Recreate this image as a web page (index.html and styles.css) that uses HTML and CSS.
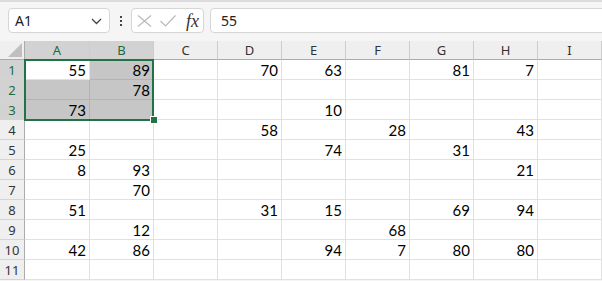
FILE: index.html
```html
<!DOCTYPE html>
<html lang="en">
<head>
<meta charset="UTF-8" />
<meta name="viewport" content="width=device-width, initial-scale=1" />
<title>Sheet</title>
<link rel="stylesheet" href="styles.css">
</head>
<body>

<div class="formula-bar">
  <div class="name-box">
    <span>A1</span>
    <svg width="11" height="7" viewBox="0 0 11 7"><path d="M1 1 L5.5 5.5 L10 1" fill="none" stroke="#444" stroke-width="1.3"/></svg>
  </div>
  <div class="grip"><i></i><i></i><i></i></div>
  <div class="fx-box">
    <svg width="15" height="12" viewBox="0 0 15 12"><path d="M1 0.5 L14 11.5 M14 0.5 L1 11.5" stroke="#b9b9b9" stroke-width="1.2" fill="none"/></svg>
    <svg width="16" height="12" viewBox="0 0 16 12"><path d="M0.5 6 L5.5 11 L15.5 0.5" stroke="#b9b9b9" stroke-width="1.2" fill="none"/></svg>
    <span class="fx">fx</span>
  </div>
  <div class="formula-input">55</div>
</div>

<div class="sheet">
  <div class="corner"><svg width="14" height="14" viewBox="0 0 14 14"><path d="M14 0 L14 14 L0 14 Z" fill="#bfbfbf"/></svg></div>
  <div class="ch sel">A</div><div class="ch sel">B</div><div class="ch">C</div><div class="ch">D</div><div class="ch">E</div><div class="ch">F</div><div class="ch">G</div><div class="ch">H</div><div class="ch">I</div>

  <div class="rh sel">1</div><div class="c">55</div><div class="c hl">89</div><div class="c"></div><div class="c">70</div><div class="c">63</div><div class="c"></div><div class="c">81</div><div class="c">7</div><div class="c"></div>
  <div class="rh sel">2</div><div class="c hl"></div><div class="c hl">78</div><div class="c"></div><div class="c"></div><div class="c"></div><div class="c"></div><div class="c"></div><div class="c"></div><div class="c"></div>
  <div class="rh sel">3</div><div class="c hl">73</div><div class="c hl"></div><div class="c"></div><div class="c"></div><div class="c">10</div><div class="c"></div><div class="c"></div><div class="c"></div><div class="c"></div>
  <div class="rh">4</div><div class="c"></div><div class="c"></div><div class="c"></div><div class="c">58</div><div class="c"></div><div class="c">28</div><div class="c"></div><div class="c">43</div><div class="c"></div>
  <div class="rh">5</div><div class="c">25</div><div class="c"></div><div class="c"></div><div class="c"></div><div class="c">74</div><div class="c"></div><div class="c">31</div><div class="c"></div><div class="c"></div>
  <div class="rh">6</div><div class="c">8</div><div class="c">93</div><div class="c"></div><div class="c"></div><div class="c"></div><div class="c"></div><div class="c"></div><div class="c">21</div><div class="c"></div>
  <div class="rh">7</div><div class="c"></div><div class="c">70</div><div class="c"></div><div class="c"></div><div class="c"></div><div class="c"></div><div class="c"></div><div class="c"></div><div class="c"></div>
  <div class="rh">8</div><div class="c">51</div><div class="c"></div><div class="c"></div><div class="c">31</div><div class="c">15</div><div class="c"></div><div class="c">69</div><div class="c">94</div><div class="c"></div>
  <div class="rh">9</div><div class="c"></div><div class="c">12</div><div class="c"></div><div class="c"></div><div class="c"></div><div class="c">68</div><div class="c"></div><div class="c"></div><div class="c"></div>
  <div class="rh">10</div><div class="c">42</div><div class="c">86</div><div class="c"></div><div class="c"></div><div class="c">94</div><div class="c">7</div><div class="c">80</div><div class="c">80</div><div class="c"></div>
  <div class="rh">11</div><div class="c"></div><div class="c"></div><div class="c"></div><div class="c"></div><div class="c"></div><div class="c"></div><div class="c"></div><div class="c"></div><div class="c"></div>

  <!-- selection A1:B3 -->
  <div class="selection"></div>
  <div class="fill-handle"></div>
</div>

</body>
</html>
```

FILE: styles.css
```css
body {
  margin: 0;
  background: #f5f5f5;
  font-family: "Noto Sans", "Open Sans", sans-serif;
  color: #222;
  overflow: hidden;
}
.formula-bar {
  height: 41px;
  box-sizing: border-box;
  border-top: 2px solid #dcdcdc;
  padding: 6px 0 8px 8px;
  display: flex;
  align-items: stretch;
}
.name-box, .fx-box, .formula-input {
  background: #fff;
  border: 1px solid #d6d6d6;
  border-radius: 4px;
  box-sizing: border-box;
}
.name-box {
  width: 102px;
  display: flex;
  align-items: center;
  justify-content: space-between;
  padding: 0 7px 0 6px;
  font-size: 14px;
}
.name-box svg {
  margin-top: 2px;
}
.grip {
  width: 21px;
  display: flex;
  flex-direction: column;
  align-items: center;
  justify-content: center;
  gap: 2px;
}
.grip i {
  width: 2px;
  height: 2px;
  background: #444;
}
.fx-box {
  width: 73px;
  display: flex;
  align-items: center;
  padding: 0 4px 0 5px;
  gap: 8px;
}
.fx {
  font-family: "Liberation Serif", serif;
  font-style: italic;
  font-size: 18px;
  color: #333;
  margin-left: 2px;
  line-height: 1;
}
.formula-input {
  flex: 1;
  margin-left: 6px;
  margin-right: -4px;
  padding-left: 10px;
  font-size: 14px;
  display: flex;
  align-items: center;
}
.sheet {
  position: relative;
  display: grid;
  grid-template-columns: 25px 65px repeat(8, 64px);
  grid-template-rows: 19px repeat(11, 20px);
  background: #fff;
}
.corner, .ch, .rh {
  background: #efefef;
  box-sizing: border-box;
  font-size: 13px;
  color: #333;
  display: flex;
  align-items: center;
  justify-content: center;
}
.corner {
  border-right: 1px solid #ababab;
  border-bottom: 1px solid #ababab;
  align-items: flex-end;
  justify-content: flex-end;
  padding: 0 2px 2px 0;
}
.ch {
  border-right: 1px solid #cdcdcd;
  border-bottom: 1px solid #ababab;
}
.rh {
  border-right: 1px solid #ababab;
  border-bottom: 1px solid #d4d4d4;
}
.ch.sel, .rh.sel {
  background: #d2d2d2;
  color: #1d6b40;
}
.c {
  box-sizing: border-box;
  border-right: 1px solid #e1e1e1;
  border-bottom: 1px solid #e1e1e1;
  font-family: Lato, "Liberation Sans", sans-serif;
  font-size: 15px;
  color: #000;
  text-align: right;
  padding: 1px 3px 0 0;
  line-height: 19px;
}
.c.hl {
  background: #c6c6c6;
  border-color: #b4b4b4;
}
.selection {
  position: absolute;
  left: 24px;
  top: 18px;
  width: 130px;
  height: 62px;
  box-sizing: border-box;
  border: 2px solid #217346;
}
.fill-handle {
  position: absolute;
  left: 150px;
  top: 75px;
  width: 6px;
  height: 6px;
  background: #217346;
  border: 1px solid #fff;
}
```
